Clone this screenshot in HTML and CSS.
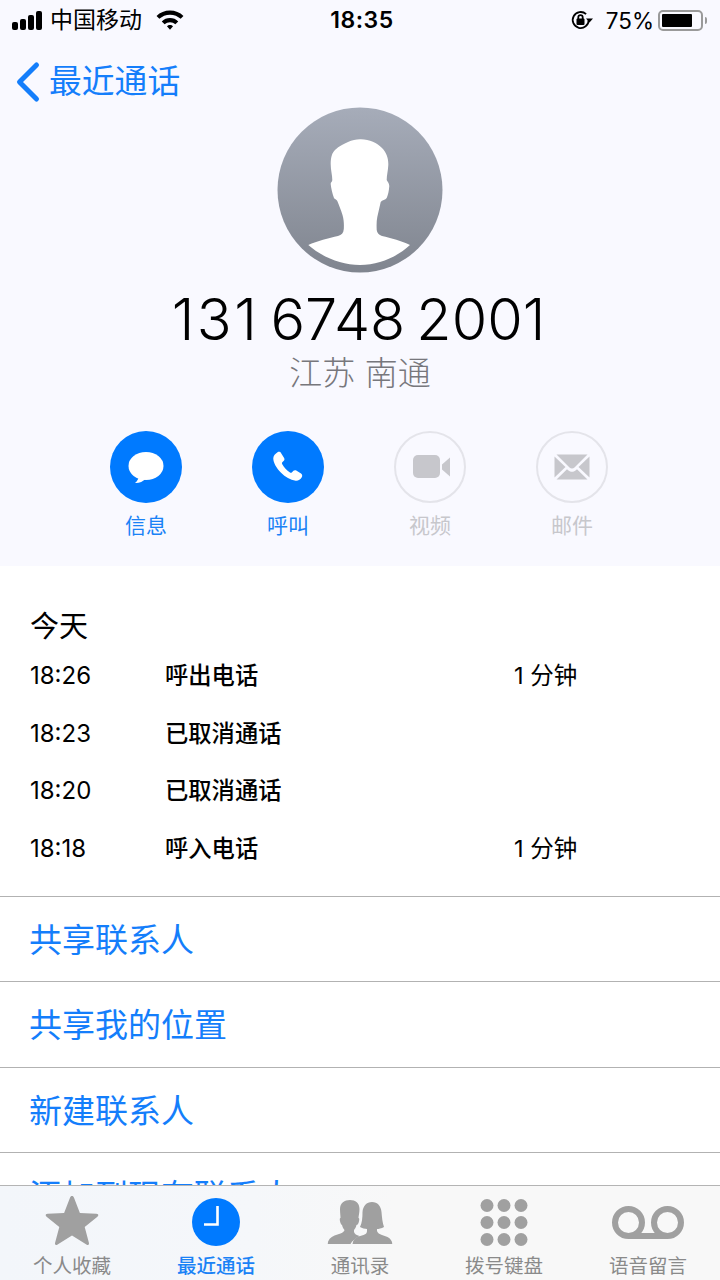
FILE: index.html
```html
<!DOCTYPE html>
<html lang="zh-CN">
<head>
<meta charset="utf-8">
<title>最近通话</title>
<link rel="stylesheet" href="styles.css">
</head>
<body>
<div class="phone">
  <div class="scroll">
    <header class="hero">
      <div class="status">
        <div class="status-left">
          <span class="signal"><i class="b1"></i><i class="b2"></i><i class="b3"></i><i class="b4"></i></span>
          <span class="carrier">中国移动</span>
          <svg class="wifi" width="28" height="20" viewBox="2.500 2 23 16.500"><path d="M14 2.500c4.300 0 8.200 1.700 11.100 4.400l-2.300 2.400C20.500 7.200 17.400 5.900 14 5.900S7.500 7.200 5.200 9.300L2.900 6.900C5.800 4.200 9.700 2.500 14 2.500z"/><path d="M14 8.700c2.600 0 5 1 6.800 2.700l-2.400 2.400c-1.200-1.100-2.700-1.700-4.400-1.700s-3.200.6-4.400 1.700l-2.400-2.400C9 9.700 11.400 8.700 14 8.700z"/><path d="M14 14.400c1 0 1.800.4 2.500 1L14 18.200l-2.500-2.800c.7-.6 1.500-1 2.500-1z"/></svg>
        </div>
        <div class="clock">18:35</div>
        <div class="status-right">
          <svg class="lock" width="24" height="22" viewBox="0 0 24 22"><path class="lock-ring" d="M18.700 11a8 8 0 1 1-2.600-5.900"/><path d="M23 9.500h-7l3.500 4z"/><rect x="6.500" y="9.500" width="8" height="6.500" rx="1"/><path class="lock-shackle" d="M8.300 10V8.300a2.200 2.200 0 0 1 4.400 0V10"/></svg>
          <span class="percent">75%</span>
          <span class="battery"><span class="battery-fill"></span></span>
          <span class="battery-cap"></span>
        </div>
      </div>
      <nav class="back">
        <svg class="chevron" width="26" height="42" viewBox="0 0 26 42"><path d="M21.500 4 4.500 21l17 17"/></svg>
        <span>最近通话</span>
      </nav>
      <div class="avatar">
        <svg width="166" height="166" viewBox="0 0 166 166">
          <defs>
            <linearGradient id="avatarFill" x1="0" y1="0" x2="0" y2="1">
              <stop offset="0" stop-color="#a6acb9"/>
              <stop offset="1" stop-color="#80858f"/>
            </linearGradient>
          </defs>
          <circle cx="83" cy="83" r="82.500" fill="url(#avatarFill)"/>
          <path class="bust" d="M83 32.300C92 32 100 36 105 41C110 46 111.500 52 111.300 58C111 64 109.700 68 109.700 73C110 74 112.300 76 112.300 79C112 84 111 88 109.700 91C108.500 93 105 93 103.700 95C102.500 100 101.500 105 100.300 110C99.500 114 99.500 118 99.700 123C100 126 102 128 105 129C114 131 125 134 133 138C120 150 102 158 83 158C64 158 45 150 31.300 138C40 134 52 131 61 129C64.500 128 66.500 126 66.800 122C67 118 67 113 65.500 108C64 103 62 98 60.300 94C59.500 92 57.500 92.500 57 91C55.500 87 54 81 53.700 77C53.600 75 55.300 75 55.300 73C55.300 68 53.500 63 53.700 56C54 50 55 46 58 43C62 39 67 37 71 35C75 33 79 32.500 83 32.300Z"/>
        </svg>
      </div>
      <h1 class="number"><span class="prefix">131</span> 6748 2001</h1>
      <p class="place">江苏 南通</p>
      <div class="actions">
        <div class="action on">
          <span class="disc">
            <svg width="40" height="36" viewBox="0 0 40 36"><ellipse cx="20" cy="17" rx="17.500" ry="14" fill="#fff"/><path d="M13 27c-.5 3-2 5.500-4 7 4 .3 8-1.500 10.500-4z" fill="#fff"/></svg>
          </span>
          <span class="label">信息</span>
        </div>
        <div class="action on">
          <span class="disc">
            <svg width="38" height="38" viewBox="1.500 0 40 40"><path d="M10.500 4.500c1.300-.9 3-.4 3.800.9l3.100 5c.6 1 .5 2.200-.3 3l-1.600 1.700c-.5.500-.5 1.200-.2 1.800 2 3.800 4.800 6.800 8.300 9 .7.400 1.400.3 1.900-.2l1.700-1.700c.8-.8 2-.9 3-.3l5 3.200c1.300.8 1.700 2.500.8 3.800-1.500 2.400-3.800 4-6.400 3.700-5.700-.6-11-3.800-15.400-8.300C9.300 21 6 15.300 6 10.700c0-2.500 2.300-4.800 4.500-6.200z" fill="#fff"/></svg>
          </span>
          <span class="label">呼叫</span>
        </div>
        <div class="action off">
          <span class="disc">
            <svg width="40" height="26" viewBox="-2 0 40 26"><rect x="1" y="1" width="27" height="23" rx="5"/><path d="M30 10.500 38 3.500v19l-8-7z"/></svg>
          </span>
          <span class="label">视频</span>
        </div>
        <div class="action off">
          <span class="disc">
            <svg width="36" height="26" viewBox="0 0 36 26"><path d="M.5 2.500 11.500 13 .5 23.500z"/><path d="M35.500 2.500 24.500 13l11 10.500z"/><path d="M2.500.5h31L20.500 13.500c-1.500 1.400-3.500 1.400-5 0z"/><path d="M2.500 25.500l10.500-10.300 1.500 1.300c2 1.800 5 1.800 7 0l1.500-1.300 10.500 10.300z"/></svg>
          </span>
          <span class="label">邮件</span>
        </div>
      </div>
    </header>

    <section class="calls">
      <h2 class="day">今天</h2>
      <div class="call"><span class="time">18:26</span><span class="kind">呼出电话</span><span class="span">1 分钟</span></div>
      <div class="call"><span class="time">18:23</span><span class="kind">已取消通话</span><span class="span"></span></div>
      <div class="call"><span class="time">18:20</span><span class="kind">已取消通话</span><span class="span"></span></div>
      <div class="call"><span class="time">18:18</span><span class="kind">呼入电话</span><span class="span">1 分钟</span></div>
    </section>

    <ul class="links">
      <li>共享联系人</li>
      <li>共享我的位置</li>
      <li>新建联系人</li>
      <li>添加到现有联系人</li>
    </ul>
  </div>

  <footer class="tabs">
    <div class="tab">
      <svg class="ico-star" width="56" height="52" viewBox="0 0 56 52"><path d="M28 2c1 0 1.600.6 2 1.700l5.900 15.200 16.300.9c2.300.1 2.800 1.600 1.200 3L40.700 33l4.200 15.800c.5 2-.8 2.900-2.500 1.700L28 41.600 13.600 50.500c-1.700 1.200-3 .3-2.500-1.700L15.300 33 2.600 22.800c-1.600-1.400-1.100-2.900 1.200-3l16.300-.9L26 3.700c.4-1.100 1-1.700 2-1.700z" fill="#a0a0a0"/></svg>
      <span>个人收藏</span>
    </div>
    <div class="tab current">
      <svg class="ico-clock" width="48" height="48" viewBox="0 0 48 48"><circle cx="24" cy="24" r="24" fill="#007aff"/><path d="M25.500 8v18.500H12" fill="none" stroke="#fff" stroke-width="2.600"/></svg>
      <span>最近通话</span>
    </div>
    <div class="tab">
      <svg class="ico-people" width="65" height="44" viewBox="0 0 65 44"><path d="M22.500 0C28 0 32 3 32 9C32 13 31 16 31 18C32 18 32 20 31 23C30.500 24 30 25 29 25C28.500 27 27.500 29 26.500 30L26.500 32C27 34 29 35 32 36C28 38 24.500 41 23 44H0C.5 40 3 37 7 35.500L13 33.500C15.500 32.500 17 31 17 30C16 29 15 27 14.500 25C14 25 13.500 24 13 23C12 20 12 18 13 18C13 16 12.500 13 12.500 9C12.500 3 17 0 22.500 0Z" fill="#a0a0a0"/><path d="M44.500 2C50 2 53.500 6 54 12C54.500 18 55 23 56.500 27C54 28.500 51 29 49.500 29L49.500 31C50 33 52 34 54.500 35L60 37C63 38.500 64.500 41 65 44H25C25.500 40 27.500 38 31 36.500L36 35C38.500 34 39.500 33 39.500 31L39.500 29C37.500 29 34.500 28 32.500 27C34.500 23 35 18 35 12C35.500 6 39 2 44.500 2Z" fill="#a0a0a0"/></svg>
      <span>通讯录</span>
    </div>
    <div class="tab">
      <span class="pad"><i></i><i></i><i></i><i></i><i></i><i></i><i></i><i></i><i></i></span>
      <span>拨号键盘</span>
    </div>
    <div class="tab">
      <svg class="ico-voicemail" width="72" height="33" viewBox="0 0 72 33"><circle cx="16.500" cy="16.500" r="13.500" fill="none" stroke="#a0a0a0" stroke-width="6"/><circle cx="55.500" cy="16.500" r="13.500" fill="none" stroke="#a0a0a0" stroke-width="6"/><path d="M16.500 30h39" fill="none" stroke="#a0a0a0" stroke-width="6"/></svg>
      <span>语音留言</span>
    </div>
  </footer>
</div>
</body>
</html>
```

FILE: styles.css
```css
* { box-sizing: border-box; }

html, body {
  margin: 0;
  padding: 0;
  background: #fff;
}

body {
  font-family: Inter, "Noto Sans CJK SC", sans-serif;
}

.phone {
  width: 720px;
  height: 1280px;
  display: flex;
  flex-direction: column;
  overflow: hidden;
}

.scroll {
  height: 1185px;
  overflow: hidden;
  flex: none;
}

/* top block */
.hero {
  height: 566px;
  background: #f9f9ff;
  display: flex;
  flex-direction: column;
  align-items: center;
}

.status {
  width: 100%;
  height: 40px;
  padding: 0 13px 0 12px;
  display: grid;
  grid-template-columns: 1fr auto 1fr;
  align-items: center;
  color: #000;
}

.status-left,
.status-right {
  display: flex;
  align-items: center;
}

.status-right { justify-content: flex-end; }

.signal {
  display: flex;
  align-items: flex-end;
  gap: 2px;
  height: 19px;
  margin-right: 8px;
}

.signal i {
  display: block;
  width: 6px;
  border-radius: 2px;
  background: #000;
}

.signal .b1 { height: 8px; }
.signal .b2 { height: 11px; }
.signal .b3 { height: 15px; }
.signal .b4 { height: 19px; }

.carrier {
  font-size: 23px;
  font-weight: 400;
  line-height: 40px;
}

.wifi { margin-left: 14px; fill: #000; }

.clock {
  margin-left: 5px;
  font-size: 23px;
  font-weight: 600;
  letter-spacing: 0.5px;
}

.lock { margin-right: 12px; fill: #000; }
.lock-ring, .lock-shackle { fill: none; stroke: #000; stroke-width: 1.800; }

.percent {
  font-size: 22.500px;
  font-weight: 400;
  margin-right: 4px;
}

.battery {
  width: 45px;
  height: 21px;
  padding: 2px;
  border: 2px solid #9a9a9a;
  border-radius: 5px;
  display: block;
}

.battery-fill {
  display: block;
  width: 80%;
  height: 100%;
  background: #000;
  border-radius: 1px;
}

.battery-cap {
  width: 2px;
  height: 7px;
  margin-left: 2px;
  background: #9a9a9a;
  border-radius: 0 2px 2px 0;
}

.back {
  width: 100%;
  height: 67px;
  padding: 16px 0 0 15px;
  display: flex;
  align-items: center;
  gap: 8px;
  color: #147efb;
  font-size: 32.800px;
  line-height: 1;
  flex: none;
}

.chevron {
  fill: none;
  stroke: #147efb;
  stroke-width: 5;
  stroke-linecap: round;
  stroke-linejoin: round;
}

.avatar {
  width: 166px;
  height: 166px;
  flex: none;
}

.avatar svg { display: block; }

.bust { fill: #fff; }

.number {
  margin: 16px 3px 0 0;
  font-size: 57.500px;
  font-weight: 300;
  line-height: 60px;
  color: #000;
  word-spacing: -5px;
}

.number .prefix { letter-spacing: 2.500px; }

.place {
  margin: 2px 0 0;
  font-size: 33px;
  font-weight: 300;
  line-height: 44px;
  color: #77777c;
}

.actions {
  width: 498px;
  margin: 36px 2px 0 0;
  display: flex;
  justify-content: space-between;
}

.action {
  width: 72px;
  display: flex;
  flex-direction: column;
  align-items: center;
}

.disc {
  width: 72px;
  height: 72px;
  border-radius: 50%;
  display: flex;
  align-items: center;
  justify-content: center;
}

.action .label {
  margin-top: 8px;
  font-size: 21px;
  line-height: 30px;
}

.on .disc { background: #007aff; }
.on .label { color: #1a82f6; }

.off .disc { border: 2px solid #e4e4ea; }
.off .disc svg { fill: #c7c7cc; }
.off .label { color: #c7c7cc; }

/* call history */
.calls {
  height: 331px;
  padding: 40px 0 0 30px;
  background: #fff;
  border-bottom: 1px solid #b2b2b2;
}

.day {
  margin: 0 0 -2px;
  font-size: 29px;
  font-weight: 400;
  line-height: 42px;
  color: #000;
}

.call {
  height: 57.600px;
  display: flex;
  align-items: baseline;
  padding-top: 11px;
  font-size: 24px;
  color: #000;
}

.time {
  width: 135px;
  font-size: 24px;
  font-weight: 400;
}

.kind { width: 349px; font-weight: 500; font-size: 23.300px; }
.span { font-weight: 400; font-size: 23.500px; }

/* link rows */
.links {
  margin: 0;
  padding: 0;
  list-style: none;
}

.links li {
  height: 85.330px;
  padding: 0 0 2px 29px;
  display: flex;
  align-items: center;
  font-size: 33px;
  color: #147efb;
  border-bottom: 1px solid #b2b2b2;
}

/* bottom bar */
.tabs {
  height: 95px;
  flex: none;
  display: grid;
  grid-template-columns: repeat(5, 144px);
  background: linear-gradient(to right, #f3f6fa 0, #f5f7fa 35%, #f8f8f8 55%);
  border-top: 1px solid #b4b4b4;
}

.tab {
  position: relative;
  height: 94px;
  display: flex;
  flex-direction: column;
  align-items: center;
  justify-content: flex-end;
  font-size: 19.500px;
  line-height: 24px;
  color: #8a8a8a;
  padding-bottom: 2px;
}

.tab svg,
.tab .pad {
  position: absolute;
  left: 50%;
  transform: translateX(-50%);
}

.ico-star { top: 8px; }
.ico-clock { top: 12px; }
.ico-people { top: 14px; }
.ico-voicemail { top: 20px; }
.tab .pad { top: 13px; }

.tab.current { color: #1a82f6; font-weight: 500; }

.pad {
  width: 47px;
  height: 47px;
  display: grid;
  grid-template-columns: repeat(3, 13px);
  grid-template-rows: repeat(3, 13px);
  gap: 4px;
}

.pad i {
  display: block;
  border-radius: 50%;
  background: #a0a0a0;
}
```
